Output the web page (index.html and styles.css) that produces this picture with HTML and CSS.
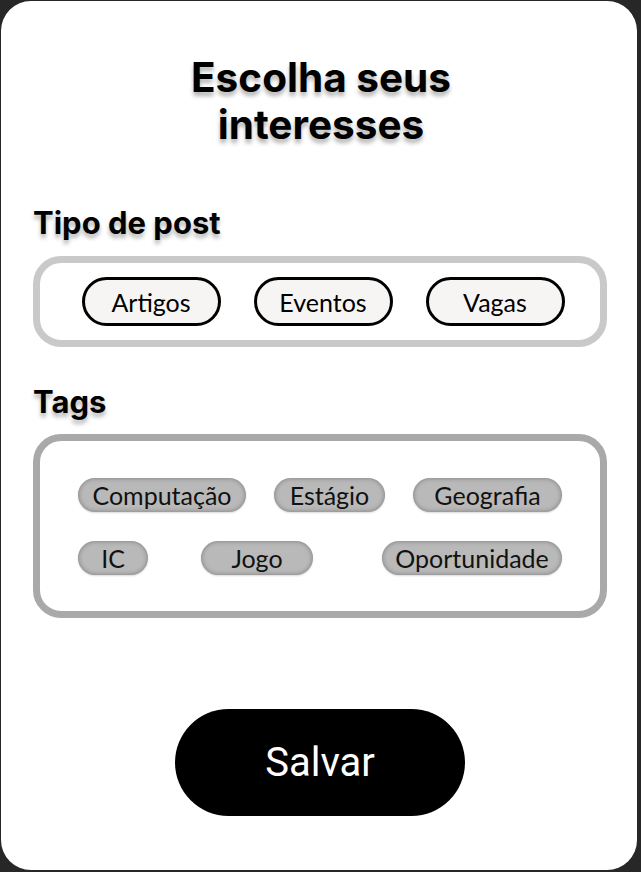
FILE: index.html
```html
<!DOCTYPE html>
<html lang="pt">
<head>
<meta charset="utf-8">
<title>Escolha seus interesses</title>
<link rel="stylesheet" href="styles.css">
</head>
<body>
<main class="card">
  <h1 class="title">Escolha seus<br>interesses</h1>

  <h2 class="section-title section-title--first">Tipo de post</h2>
  <div class="box box--types">
    <button class="type-pill">Artigos</button>
    <button class="type-pill">Eventos</button>
    <button class="type-pill">Vagas</button>
  </div>

  <h2 class="section-title section-title--tags">Tags</h2>
  <div class="box box--tags">
    <div class="tag-row tag-row--first">
      <span class="tag tag--computacao">Computação</span>
      <span class="tag tag--estagio">Estágio</span>
      <span class="tag tag--geografia">Geografia</span>
    </div>
    <div class="tag-row tag-row--second">
      <span class="tag tag--ic">IC</span>
      <span class="tag tag--jogo">Jogo</span>
      <span class="tag tag--oportunidade">Oportunidade</span>
    </div>
  </div>

  <div class="actions">
    <button class="save">Salvar</button>
  </div>
</main>
</body>
</html>
```

FILE: styles.css
```css
* { box-sizing: border-box; }

html, body {
  margin: 0;
  height: 100%;
}

body {
  background: #272727;
  padding: 1px 4px 2px 1px;
}

.card {
  background: #ffffff;
  width: 636px;
  height: 869px;
  border-radius: 30px;
  padding: 53px 32px 0 32px;
  display: flex;
  flex-direction: column;
}

.title {
  margin: 0;
  font-family: Inter, "Noto Sans", sans-serif;
  font-weight: 700;
  font-size: 40.5px;
  line-height: 47px;
  text-align: center;
  color: #000;
  text-shadow: 0 4px 4px rgba(0, 0, 0, 0.3);
  padding-left: 4px;
}

.section-title {
  margin: 0;
  font-family: Inter, "Noto Sans", sans-serif;
  font-weight: 700;
  font-size: 31px;
  line-height: 36px;
  color: #000;
  text-shadow: 0 4px 4px rgba(0, 0, 0, 0.3);
}

.section-title--first { margin-top: 57px; }
.section-title--tags { margin-top: 37px; }

.box {
  width: 574px;
  border-radius: 28px;
  background: #fff;
}

.box--types {
  margin-top: 15px;
  height: 91px;
  border: 7px solid #c9c9c9;
  display: flex;
  justify-content: center;
  align-items: center;
  gap: 33px;
  padding-left: 6px;
}

.type-pill {
  width: 139px;
  height: 49px;
  border: 3px solid #000;
  border-radius: 25px;
  background: #f6f5f3;
  font-family: Lato, "Open Sans", sans-serif;
  font-size: 25px;
  color: #000;
  padding: 0;
  display: flex;
  align-items: center;
  justify-content: center;
}

.box--tags {
  margin-top: 14px;
  height: 184px;
  border: 7px solid #a9a9a9;
  padding: 37px 38px 0 38px;
  display: flex;
  flex-direction: column;
  gap: 29px;
}

.tag-row {
  display: flex;
  align-items: center;
  width: 484px;
}

.tag-row--first { gap: 28px; }
.tag-row--second { gap: 53px; }

.tag {
  height: 34px;
  border-radius: 17px;
  background: #b9b9b9;
  box-shadow: inset 0 0 5px rgba(0, 0, 0, 0.35), 0 1px 2px rgba(0, 0, 0, 0.15);
  font-family: Lato, "Open Sans", sans-serif;
  font-size: 25px;
  color: #111;
  display: flex;
  align-items: center;
  justify-content: center;
}

.tag--computacao { width: 168px; }
.tag--estagio { width: 111px; }
.tag--geografia { width: 149px; }
.tag--ic { width: 70px; }
.tag--jogo { width: 112px; }
.tag--oportunidade { width: 180px; margin-left: auto; }

.actions {
  display: flex;
  justify-content: center;
  margin-top: 91px;
}

.save {
  width: 290px;
  height: 107px;
  border: none;
  border-radius: 54px;
  background: #000;
  color: #fff;
  font-family: Roboto, Inter, sans-serif;
  font-size: 40px;
  font-weight: 400;
  padding: 0;
  margin-left: 2px;
}
```
